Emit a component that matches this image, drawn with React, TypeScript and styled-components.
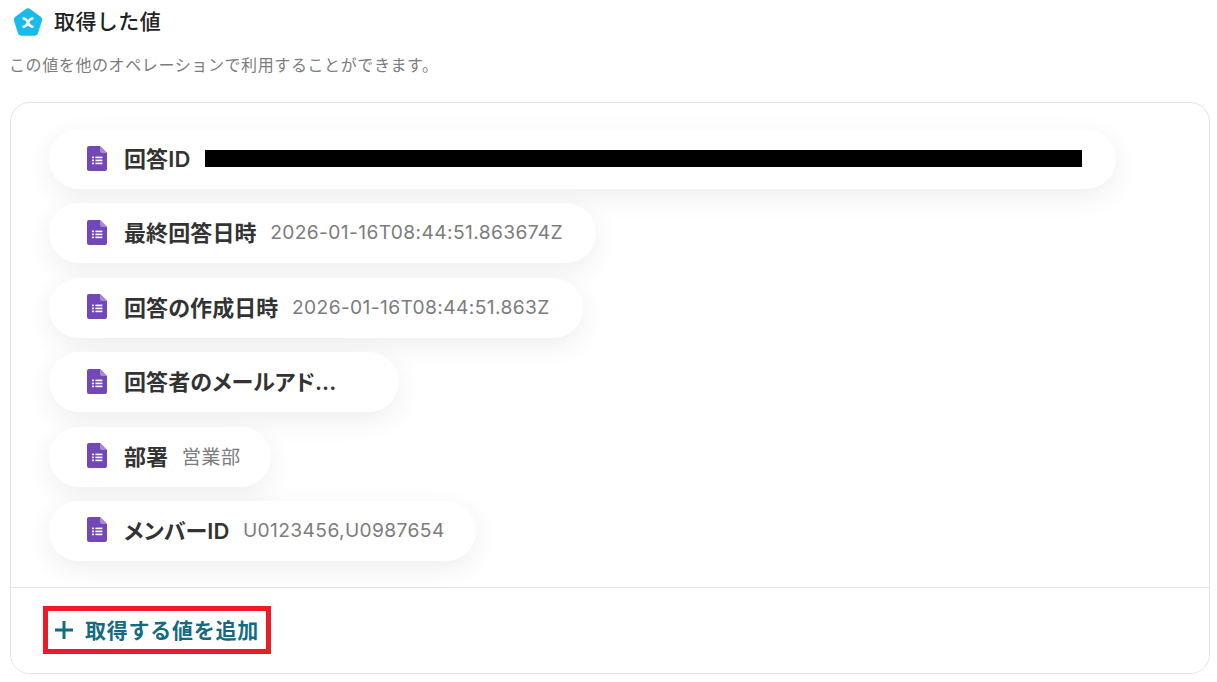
import React from "react";
import styled, { createGlobalStyle } from "styled-components";

const Global = createGlobalStyle`
  html, body { margin: 0; padding: 0; background: #fff; overflow: hidden; }
  body { font-family: Inter, "Noto Sans CJK JP", sans-serif; }
`;
const Page = styled.div`
  width: 1217px; height: 682px; box-sizing: border-box; padding: 4px 7px 0 10px; overflow: hidden;
`;
const Header = styled.div`
  display: flex; align-items: center; gap: 10px; height: 36px; padding-left: 2px;
`;
const Title = styled.h2`
  margin: 0; font-size: 21px; font-weight: 500; letter-spacing: 0.02em; color: #222; line-height: 36px;
`;
const Desc = styled.p`
  margin: 14px 0 0 -1px; font-size: 16px; line-height: 22px; letter-spacing: 0.0375em; color: #7c7c7c;
`;
const Card = styled.section`
  margin-top: 26px; height: 572px; box-sizing: border-box; border: 1px solid #e4e4e4; border-radius: 20px;
  display: flex; flex-direction: column; overflow: hidden;
`;
const List = styled.div`
  flex: 1; display: flex; flex-direction: column; align-items: flex-start; gap: 14.4px; padding: 26px 38px 0;
  overflow: hidden;
`;
const Chip = styled.div<{ $width: number }>`
  width: ${(p) => p.$width}px; height: 60px; flex: none; box-sizing: border-box; padding: 0 0 2px 37.5px;
  display: flex; align-items: center; background: #fff; border-radius: 30px;
  box-shadow: 0 8px 28px rgba(0, 0, 0, 0.07);
  white-space: nowrap;
`;
const Label = styled.span`
  margin: 0 0 2px 17.5px; font-size: 22px; font-weight: 600; letter-spacing: 0.005em; color: #333;
  font-feature-settings: "palt";
`;
const Value = styled.span`
  margin-left: 13.5px; font-size: 19.2px; letter-spacing: 0.02em; color: #7c7c7c; position: relative; flex: none;
`;
const Redact = styled.span`
  display: block; width: 877px; height: 17px; margin-left: 1px; background: #000;
`;
const Footer = styled.div`
  flex: none; height: 86px; box-sizing: border-box; border-top: 1px solid #e2e2e2; padding: 18px 0 0 32px;
  background: #fff;
`;
const Highlight = styled.div`
  display: inline-flex; align-items: center; gap: 11px; width: 228px; height: 48px; box-sizing: border-box;
  border: 5px solid #ed1c24; padding: 0 0 2px 6px;
`;
const AddText = styled.span`
  font-size: 21px; font-weight: 600; letter-spacing: 0.035em; color: #136b82; white-space: nowrap;
`;

const FormsIcon = () => (
  <svg width="20" height="25" viewBox="0 0 20 25" style={{ flex: "none" }}>
    <path d="M2 0H13L20 7V23a2 2 0 0 1-2 2H2a2 2 0 0 1-2-2V2a2 2 0 0 1 2-2Z" fill="#7248b9" />
    <path d="M13 0L20 7H15a2 2 0 0 1-2-2Z" fill="#a58ad6" />
    <g fill="#fff">
      <rect x="5" y="10.6" width="2" height="1.6" /><rect x="8.4" y="10.6" width="7" height="1.6" />
      <rect x="5" y="13.6" width="2" height="1.6" /><rect x="8.4" y="13.6" width="7" height="1.6" />
      <rect x="5" y="16.6" width="2" height="1.6" /><rect x="8.4" y="16.6" width="7" height="1.6" />
    </g>
  </svg>
);
const Logo = () => (
  <svg width="32" height="32" viewBox="0 0 32 32" style={{ flex: "none", marginTop: 2 }}>
    <path d="M13.6 2.2a4 4 0 0 1 4.8 0l10 7.3a4 4 0 0 1 1.5 4.5l-3.8 11.9a4 4 0 0 1-3.8 2.8H9.700a4 4 0 0 1-3.800-2.800L2.100 14a4 4 0 0 1 1.500-4.500Z" fill="#18bbea" />
    <path d="M11.500 11.500c3 0 3.500 2.500 4.500 4s1.500 4.200 4.500 4.200M20.500 11.500c-3 0-3.500 2.500-4.500 4s-1.500 4.200-4.500 4.200" stroke="#fff" strokeWidth="2.400" fill="none" strokeLinecap="round" />
  </svg>
);
const PlusIcon = () => (
  <svg width="20" height="20" viewBox="0 0 20 20" style={{ flex: "none", marginTop: 2 }}>
    <path d="M10 1V19M1 10H19" stroke="#136b82" strokeWidth="3" />
  </svg>
);

const rows: { label: string; value?: string; width: number; redacted?: boolean }[] = [
  { label: "回答ID", width: 1067, redacted: true },
  { label: "最終回答日時", value: "2026-01-16T08:44:51.863674Z", width: 547 },
  { label: "回答の作成日時", value: "2026-01-16T08:44:51.863Z", width: 534 },
  { label: "回答者のメールアド...", width: 350 },
  { label: "部署", value: "営業部", width: 222 },
  { label: "メンバーID", value: "U0123456,U0987654", width: 427 },
];

export default function App() {
  return (
    <Page>
      <Global />
      <Header>
        <Logo />
        <Title>取得した値</Title>
      </Header>
      <Desc>この値を他のオペレーションで利用することができます。</Desc>
      <Card>
        <List>
          {rows.map((r) => (
            <Chip key={r.label} $width={r.width}>
              <FormsIcon />
              <Label>{r.label}</Label>
              {r.redacted ? (
                <Value><Redact /></Value>
              ) : (
                r.value && <Value>{r.value}</Value>
              )}
            </Chip>
          ))}
        </List>
        <Footer>
          <Highlight>
            <PlusIcon />
            <AddText>取得する値を追加</AddText>
          </Highlight>
        </Footer>
      </Card>
    </Page>
  );
}
